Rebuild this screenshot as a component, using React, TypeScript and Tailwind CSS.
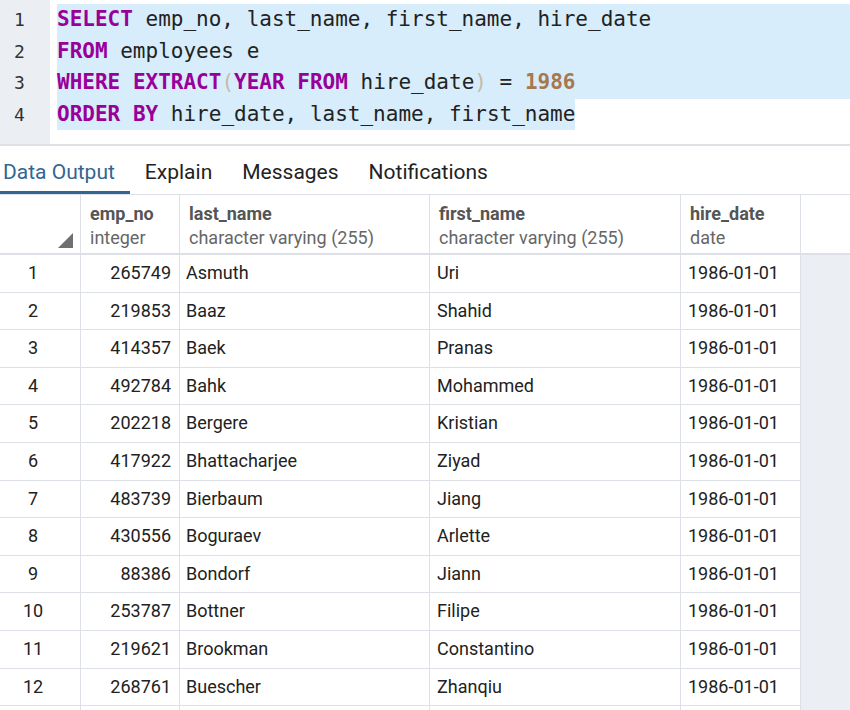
import React from "react";

const rows: [number, number, string, string][] = [
    [1, 265749, "Asmuth", "Uri"],
    [2, 219853, "Baaz", "Shahid"],
    [3, 414357, "Baek", "Pranas"],
    [4, 492784, "Bahk", "Mohammed"],
    [5, 202218, "Bergere", "Kristian"],
    [6, 417922, "Bhattacharjee", "Ziyad"],
    [7, 483739, "Bierbaum", "Jiang"],
    [8, 430556, "Boguraev", "Arlette"],
    [9, 88386, "Bondorf", "Jiann"],
    [10, 253787, "Bottner", "Filipe"],
    [11, 219621, "Brookman", "Constantino"],
    [12, 268761, "Buescher", "Zhanqiu"],
    [0, 0, "", ""],
];

const Kw = ({ children }: { children: React.ReactNode }) => (
    <span className="text-[#990099] font-bold">{children}</span>
);

const Editor = () => {
    return (
        <div className="flex h-[146px] border-b-2 border-[#dee1e6]">
            <div className="w-[50px] bg-[#ebeef3] pt-[4px] text-[18px] text-[#333] font-['DejaVu_Sans_Mono',monospace]">
                {[1, 2, 3, 4].map((n) => (
                    <div key={n} className="h-[31.5px] leading-[31.5px] pl-[14px]">{n}</div>
                ))}
            </div>
            <div className="flex-1 pt-[4px] pl-[7px] text-[21px] text-[#222] font-['DejaVu_Sans_Mono',monospace] whitespace-pre">
                <div className="h-[31.5px] leading-[31.5px] bg-[#d7edfb]">
                    <Kw>SELECT</Kw> emp_no, last_name, first_name, hire_date
                </div>
                <div className="h-[31.5px] leading-[31.5px] bg-[#d7edfb]">
                    <Kw>FROM</Kw> employees e
                </div>
                <div className="h-[31.5px] leading-[31.5px] bg-[#d7edfb]">
                    <Kw>WHERE</Kw> <Kw>EXTRACT</Kw><span className="text-[#c5bba9]">(</span><Kw>YEAR</Kw> <Kw>FROM</Kw> hire_date<span className="text-[#c5bba9]">)</span> = <span className="text-[#a5784f] font-bold">1986</span>
                </div>
                <div className="h-[31.5px] leading-[31.5px]">
                    <span className="bg-[#d7edfb] inline-block h-full"><Kw>ORDER</Kw> <Kw>BY</Kw> hire_date, last_name, first_name</span>
                </div>
            </div>
        </div>
    );
};

const Tabs = () => {
    const tabs = ["Data Output", "Explain", "Messages", "Notifications"];
    return (
        <div className="flex h-[49px] border-b border-[#dde0e6] text-[21px] font-['Roboto',sans-serif]">
            {tabs.map((t, i) => (
                <div
                    key={t}
                    className={
                        i === 0
                            ? "pl-[3px] pr-[15px] pt-[11px] border-b-[3px] border-[#326690] text-[#326690]"
                            : "px-[15px] pt-[11px] text-[#222]"
                    }
                >
                    {t}
                </div>
            ))}
        </div>
    );
};

const Grid = () => {
    return (
        <div className="font-['Roboto',sans-serif] text-[18px] text-[#222]">
            <div className="flex h-[60px] border-b-2 border-[#dde0e6]">
                <div className="w-[81px] border-r border-[#dde0e6] relative">
                    <svg className="absolute left-[58px] top-[38px]" width="15" height="15" viewBox="0 0 15 15">
                        <polygon points="15,0 15,15 0,15" fill="#707070" />
                    </svg>
                </div>
                {[
                    ["emp_no", "integer", "w-[99px]"],
                    ["last_name", "character varying (255)", "w-[250px]"],
                    ["first_name", "character varying (255)", "w-[251px]"],
                    ["hire_date", "date", "w-[120px]"],
                ].map(([name, type, w]) => (
                    <div key={name} className={`${w} border-r border-[#dde0e6] pl-[9px] pt-[7px] leading-[24px]`}>
                        <div className="font-bold text-[#555]">{name}</div>
                        <div className="text-[#666]">{type}</div>
                    </div>
                ))}
                <div className="flex-1" />
            </div>
            {rows.map(([n, id, last, first], i) => (
                <div key={i} className="flex h-[37.6px] leading-[36.6px]">
                    <div className="w-[81px] border-r border-b border-[#dde0e6] text-center pr-[14px]">{n || ""}</div>
                    <div className="w-[99px] border-r border-b border-[#dde0e6] text-right pr-[8px]">{id || ""}</div>
                    <div className="w-[250px] border-r border-b border-[#dde0e6] pl-[6px]">{last}</div>
                    <div className="w-[251px] border-r border-b border-[#dde0e6] pl-[7px]">{first}</div>
                    <div className="w-[120px] border-r border-b border-[#dde0e6] pl-[7px]">{n ? "1986-01-01" : ""}</div>
                    <div className="flex-1 bg-[#ebeef2]" />
                </div>
            ))}
        </div>
    );
};

export default function App() {
    return (
        <div className="w-[850px] h-[710px] overflow-hidden bg-white">
            <Editor />
            <Tabs />
            <Grid />
        </div>
    );
}
